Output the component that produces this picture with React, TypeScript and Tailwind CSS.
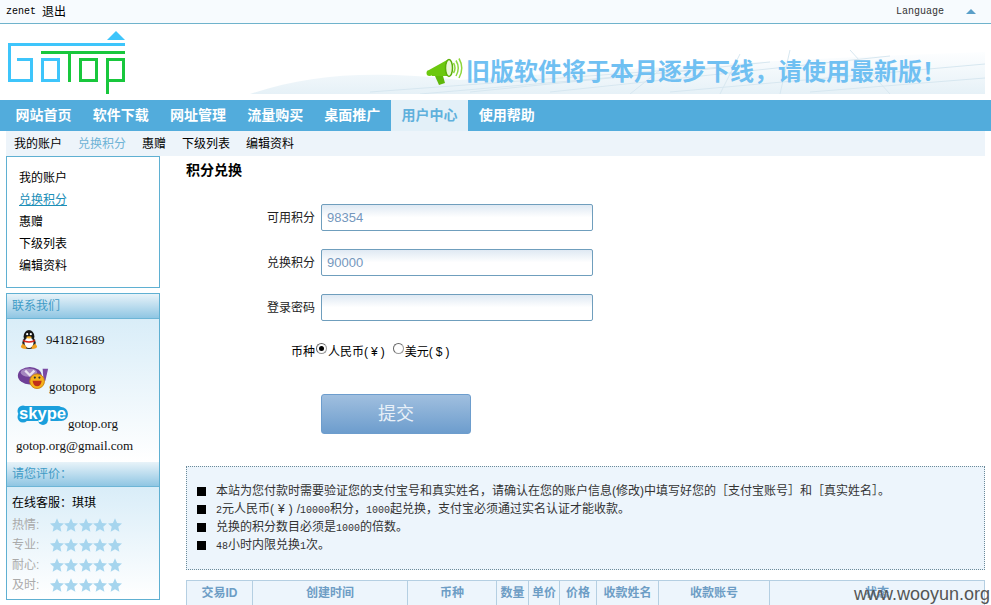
const song = "font-['Liberation_Sans','Noto_Sans_CJK_SC',sans-serif]";

const navItems = ["网站首页", "软件下载", "网址管理", "流量购买", "桌面推广", "用户中心", "使用帮助"];
const subItems = ["我的账户", "兑换积分", "惠赠", "下级列表", "编辑资料"];
const ratings = ["热情:", "专业:", "耐心:", "及时:"];

function Logo() {
  return (
    <svg width="118" height="64" viewBox="8 31 118 64" className="block">
      <path d="M107 40 L116 31 L125 40 Z" fill="#3ec5fb" />
      <path d="M8 43 H125 V46 H11 V79 H30 V61 H17 V58 H33 V82 H8 Z" fill="#3ec5fb" />
      <rect x="42.500" y="59.500" width="16" height="21" fill="none" stroke="#3ec5fb" strokeWidth="3" />
      <path d="M41 51 H125 V54 H71 V82 H68 V54 H41 Z" fill="#18c73c" />
      <rect x="80.500" y="59.500" width="16" height="21" fill="none" stroke="#18c73c" strokeWidth="3" />
      <path d="M106 58 H125 V82 H109 V94 H106 Z M109 61 V79 H122 V61 Z" fill="#18c73c" fillRule="evenodd" />
    </svg>
  );
}

function Megaphone() {
  return (
    <svg width="38" height="28" viewBox="0 0 38 28" className="shrink-0">
      <circle cx="3.500" cy="15" r="3" fill="#6cc80e" />
      <path d="M3 12 L21 2 L25 18 L6 18 Z" fill="#6cc80e" />
      <path d="M9 18 L17 18 L19 25 L13 27 Z" fill="#5fb80b" />
      <ellipse cx="23" cy="10" rx="3.500" ry="8.500" fill="#eaf7d8" stroke="#5aae06" strokeWidth="1.500" />
      <path d="M27.500 5 Q30.500 10 27.500 15 M30 2.500 Q34.500 10 30 18 M33 0.500 Q38.500 10 33 20" fill="none" stroke="#8ed63c" strokeWidth="1.500" />
    </svg>
  );
}

function BannerBack() {
  return (
    <svg width="735" height="46" viewBox="0 0 735 46" className="absolute left-0 top-0">
      <defs>
        <linearGradient id="sweep" x1="0" x2="0" y1="0" y2="1">
          <stop offset="0" stopColor="#fdfeff" />
          <stop offset="1" stopColor="#e6f1f7" />
        </linearGradient>
      </defs>
      <path d="M0 46 C60 26 120 22 210 32 C350 22 560 10 735 4 V46 Z" fill="url(#sweep)" />
      <g stroke="#d7e7f0" strokeWidth="1" fill="none">
        <path d="M120 44 L420 22 M170 46 L470 20 M220 44 L520 14 M300 44 L640 8 M420 44 L735 16 M560 44 L735 30" />
        <path d="M380 46 L420 14 M470 46 L490 6 M530 46 L540 2 M640 46 L600 2" />
      </g>
    </svg>
  );
}

function Star() {
  return (
    <svg width="14" height="14" viewBox="0 0 24 23" className="shrink-0 mr-[0.400px]">
      <path d="M12 0 L15.500 8 L24 8.800 L17.600 14.500 L19.500 23 L12 18.600 L4.500 23 L6.400 14.500 L0 8.800 L8.500 8 Z" fill="#a6d5ee" />
    </svg>
  );
}

function Qq() {
  return (
    <svg width="18" height="20" viewBox="0 0 20 22">
      <ellipse cx="10" cy="7" rx="6" ry="7" fill="#161616" />
      <ellipse cx="10" cy="14" rx="7.500" ry="7" fill="#222" />
      <ellipse cx="10" cy="14" rx="5" ry="6" fill="#fff" />
      <path d="M3 10.500 Q10 14 17 10.500 L16 13 Q10 15 4 13 Z" fill="#d8241c" />
      <path d="M1 18 Q1 21 7 21 L7 18 Q4 16 3 15 Z M19 18 Q19 21 13 21 L13 18 Q16 16 17 15 Z" fill="#f0a020" />
      <ellipse cx="10" cy="8" rx="3" ry="1.300" fill="#f5b325" />
      <circle cx="8" cy="4.500" r="1.200" fill="#fff" />
      <circle cx="12" cy="4.500" r="1.200" fill="#fff" />
    </svg>
  );
}

function Yahoo() {
  return (
    <svg width="32" height="22" viewBox="0 0 33 24" className="mb-[5px] shrink-0">
      <ellipse cx="13" cy="9.500" rx="13" ry="9.500" fill="#6f3f97" />
      <ellipse cx="12" cy="6" rx="9" ry="4.500" fill="#a586c0" />
      <path d="M8 4 L13 9 L18 4" fill="none" stroke="#e9e0f0" strokeWidth="2.500" />
      <path d="M27 2 H33 L30 15 H28 Z" fill="#7a4aa3" />
      <circle cx="21" cy="15.500" r="8" fill="#f6b21b" stroke="#c97f10" />
      <path d="M16 15 H26 Q25 21 21 21 Q17 21 16 15 Z" fill="#c0301c" />
      <circle cx="18.500" cy="11.500" r="1.200" fill="#333" />
      <circle cx="23.500" cy="11.500" r="1.200" fill="#333" />
    </svg>
  );
}

function Skype() {
  return (
    <svg width="51" height="20" viewBox="0 0 51 20" className="mb-[6px] shrink-0">
      <circle cx="6" cy="6" r="5.500" fill="#1b9fdc" />
      <circle cx="6" cy="12" r="5.500" fill="#1b9fdc" />
      <circle cx="44" cy="9" r="7" fill="#1b9fdc" />
      <circle cx="26" cy="15" r="5" fill="#1b9fdc" />
      <rect x="4" y="1" width="42" height="15" rx="5" fill="#1b9fdc" />
      <text x="2" y="14" textLength="47" lengthAdjust="spacingAndGlyphs" fontFamily="Liberation Sans" fontWeight="700" fontSize="16" fill="#fff">
        skype
      </text>
    </svg>
  );
}

function SideHead({ label }: { label: string }) {
  return (
    <div className="h-[25px] pl-[5px] flex items-center text-[12px] text-[#3f9bc6] bg-gradient-to-b from-[#e8f3f9] to-[#8fc6e3] border-b border-[#6db5d6]">
      {label}
    </div>
  );
}

function Field({ label, value }: { label: string; value?: string }) {
  return (
    <div className="flex items-center h-[27px]">
      <div className="w-[135px] pr-[6px] text-right text-[12px] text-[#222]">{label}</div>
      <div className="w-[272px] h-[27px] pl-[5px] flex items-center rounded-[2px] border border-[#6f9ebd] bg-gradient-to-b from-[#dfe9f3] via-white to-white text-[13px] text-[#7497bd]">
        {value}
      </div>
    </div>
  );
}

function L({ children }: { children: React.ReactNode }) {
  return <span className="font-['Liberation_Mono'] text-[10px]">{children}</span>;
}

function Note({ children }: { children: React.ReactNode }) {
  return (
    <div className="h-[18px] flex items-center whitespace-nowrap">
      <span className="w-[9px] h-[9px] bg-black shrink-0" />
      <span className="ml-[10px]">{children}</span>
    </div>
  );
}

const headCols = [
  { w: "w-[66px]", t: "交易ID" },
  { w: "w-[155px]", t: "创建时间" },
  { w: "w-[89px]", t: "币种" },
  { w: "w-[32px]", t: "数量" },
  { w: "w-[31px]", t: "单价" },
  { w: "w-[37px]", t: "价格" },
  { w: "w-[62px]", t: "收款姓名" },
  { w: "w-[111px]", t: "收款账号" },
  { w: "flex-1", t: "状态" },
];

export default function App() {
  return (
    <div className={`relative w-[991px] h-[605px] overflow-hidden bg-white text-black ${song}`}>
      <div className="h-[24px] flex items-center justify-between bg-[#f7fbfe] border-b border-[#6fb3cc]">
        <div className="pl-[6px] flex items-center gap-[6px]">
          <span className="font-['Liberation_Mono'] text-[10px]">zenet</span>
          <span className="text-[12px]">退出</span>
        </div>
        <div className="flex items-center">
          <span className="font-['Liberation_Mono'] text-[10px] text-[#333]">Language</span>
          <span className="ml-[22px] mr-[15px] w-0 h-0 border-x-[5px] border-x-transparent border-b-[5px] border-b-[#5a9fc8]" />
        </div>
      </div>

      <div className="h-[76px] relative flex">
        <div className="pl-[8px] pt-[7px]">
          <Logo />
        </div>
        <div className="absolute left-[250px] top-[24px] w-[735px] h-[46px]">
          <BannerBack />
          <div className="absolute left-[176px] top-[1px] h-[46px] flex items-center">
            <Megaphone />
            <span className="ml-[2px] text-[24px] font-bold text-[#70c0f2] whitespace-nowrap leading-none">
              {"旧版软件将于本月逐步下线\uFF0C请使用最新版\uFF01"}
            </span>
          </div>
        </div>
      </div>

      <div className="h-[31px] flex pl-[5px] bg-[#52acdc] text-[14px] font-bold text-white">
        {navItems.map((n) => (
          <div
            key={n}
            className={`w-[77.200px] shrink-0 flex items-center justify-center whitespace-nowrap ${
              n === "用户中心" ? "bg-[#e3f0f8] text-[#5fb0dc]" : ""
            }`}
          >
            {n}
          </div>
        ))}
      </div>

      <div className="mx-[6px] h-[25px] flex items-center pl-[8px] gap-[16px] bg-[#edf4fa] text-[12px]">
        {subItems.map((s) => (
          <span key={s} className={s === "兑换积分" ? "text-[#6fb3d6]" : ""}>
            {s}
          </span>
        ))}
      </div>

      <div className="flex pl-[6px]">
        <aside className="w-[154px] shrink-0 flex flex-col">
          <div className="h-[132px] pl-[12px] pt-[10px] border border-[#5fb0d2] flex flex-col text-[12px] leading-[22px]">
            {subItems.map((s) => (
              <span key={s} className={s === "兑换积分" ? "text-[#1d8fb8] underline" : ""}>
                {s}
              </span>
            ))}
          </div>

          <div className="mt-[5px] h-[307px] border border-[#5fb0d2]">
            <SideHead label="联系我们" />
            <div className="h-[143px] bg-gradient-to-b from-[#d9edf8] to-white font-['Liberation_Serif','Noto_Sans_CJK_SC',serif] text-[13px] text-[#111] pl-[10px]">
              <div className="flex items-center pt-[11px] pl-[3px] gap-[8px]">
                <Qq />
                <span>941821689</span>
              </div>
              <div className="mt-[17px] flex items-end">
                <Yahoo />
                <span className="leading-[14px]">gotoporg</span>
              </div>
              <div className="mt-[11px] flex items-end">
                <Skype />
                <span className="leading-[14px]">gotop.org</span>
              </div>
              <div className="mt-[8px] -ml-[1px] leading-[14px]">gotop.org@gmail.com</div>
            </div>
            <SideHead label={"请您评价\uFF1A"} />
            <div className="h-[112px] pl-[5px] pt-[6px] bg-gradient-to-b from-[#d9edf8] to-white text-[12px]">
              <div className="h-[22px] pb-[2px] flex items-center">{"在线客服\uFF1A琪琪"}</div>
              {ratings.map((r) => (
                <div key={r} className="h-[20px] flex items-center text-[#aaa]">
                  <span className="w-[38px]">{r}</span>
                  {[0, 1, 2, 3, 4].map((i) => (
                    <Star key={i} />
                  ))}
                </div>
              ))}
            </div>
          </div>
        </aside>

        <main className="ml-[26px] w-[799px] shrink-0">
          <h1 className="mt-[5px] h-[18px] flex items-center text-[14px] font-bold">积分兑换</h1>

          <div className="mt-[25px] flex flex-col gap-[18px]">
            <Field label="可用积分" value="98354" />
            <Field label="兑换积分" value="90000" />
            <Field label="登录密码" />
          </div>

          <div className="mt-[22px] ml-[105px] h-[18px] flex items-center text-[12px]">
            <span>币种</span>
            <span className="mb-[7px] ml-[1px] w-[11px] h-[11px] rounded-full border border-[#999] border-t-[#666] border-l-[#666] bg-white flex items-center justify-center">
              <span className="w-[5px] h-[5px] rounded-full bg-black" />
            </span>
            <span className="ml-[1px]">
              人民币<span className="tracking-[3px]">(¥)</span>
            </span>
            <span className="mb-[7px] ml-[5px] w-[11px] h-[11px] rounded-full border border-[#999] border-t-[#666] border-l-[#666] bg-white" />
            <span className="ml-[1px]">
              美元<span className="tracking-[3px]">($)</span>
            </span>
          </div>

          <div className="mt-[33px] ml-[135px] w-[150px] h-[40px] rounded-[3px] flex items-center justify-center bg-gradient-to-b from-[#a0bfdf] to-[#6d9dcd] border border-[#6d9dcd] text-[18px] text-[#e8f0f8]">
            提交
          </div>

          <div className="mt-[32px] h-[104px] pl-[10px] pt-[15px] border border-dotted border-[#6b8a99] bg-[#edf5fc] text-[12px] text-[#333]">
            <Note>
              {"本站为您付款时需要验证您的支付宝号和真实姓名\uFF0C请确认在您的账户信息(修改)中填写好您的\uFF3B支付宝账号\uFF3D和\uFF3B真实姓名\uFF3D。"}
            </Note>
            <Note>
              <L>2</L>元人民币<span className="tracking-[4px]">(¥)</span>/<L>10000</L>
              {"积分\uFF0C"}
              <L>1000</L>
              {"起兑换\uFF0C支付宝必须通过实名认证才能收款。"}
            </Note>
            <Note>
              兑换的积分数目必须是<L>1000</L>的倍数。
            </Note>
            <Note>
              <L>48</L>小时内限兑换<L>1</L>次。
            </Note>
          </div>

          <div className="mt-[10px] h-[30px] flex border border-[#b5cfe2] bg-[#edf5fc] text-[12px] font-bold text-[#6d9dc5]">
            {headCols.map((c) => (
              <div key={c.t} className={`${c.w} h-full pb-[4px] flex items-center justify-center border-r border-[#b5cfe2] last:border-r-0`}>
                {c.t}
              </div>
            ))}
          </div>
        </main>
      </div>

      <div className="absolute right-[1px] bottom-[0px] font-['Liberation_Sans'] text-[18px] text-[#555] leading-[22px]">
        www.wooyun.org
      </div>
    </div>
  );
}
